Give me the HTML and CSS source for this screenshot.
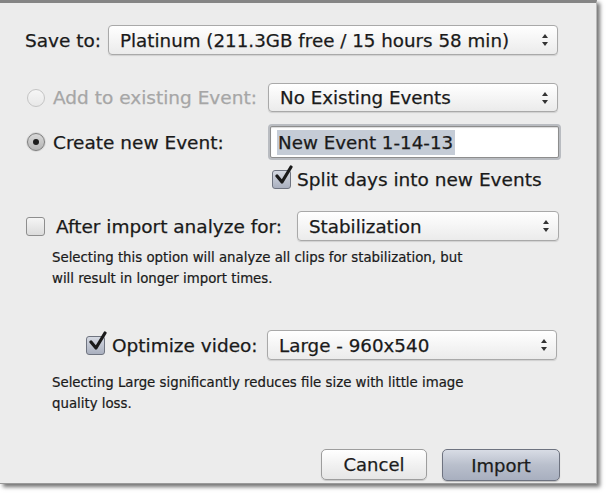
FILE: index.html
```html
<!DOCTYPE html>
<html>
<head>
<meta charset="utf-8">
<link rel="stylesheet" href="styles.css">
</head>
<body>
<div class="dialog">
  <div class="row r-save">
    <span class="label">Save to:</span>
    <div class="select w-save"><span>Platinum (211.3GB free / 15 hours 58 min)</span><i class="arrows"></i></div>
  </div>

  <div class="row r-add">
    <span class="radio disabled"></span>
    <span class="label dim lbl-radio">Add to existing Event:</span>
    <div class="select w-main"><span>No Existing Events</span><i class="arrows"></i></div>
  </div>

  <div class="row r-new">
    <span class="radio on"></span>
    <span class="label lbl-radio">Create new Event:</span>
    <div class="field"><span class="sel">New Event 1-14-13</span></div>
  </div>

  <div class="row r-split">
    <span class="check on"><svg viewBox="0 0 24 24" width="24" height="24"><path d="M5 11 L10 17 L19 2" fill="none" stroke="#1a1a1a" stroke-width="3.2" stroke-linecap="round" stroke-linejoin="round"/></svg></span>
    <span class="label">Split days into new Events</span>
  </div>

  <div class="row r-analyze">
    <span class="check"></span>
    <span class="label lbl-analyze">After import analyze for:</span>
    <div class="select w-analyze"><span>Stabilization</span><i class="arrows"></i></div>
  </div>
  <p class="help">Selecting this option will analyze all clips for stabilization, but will result in longer import times.</p>

  <div class="row r-opt">
    <span class="check on"><svg viewBox="0 0 24 24" width="24" height="24"><path d="M5 11 L10 17 L19 2" fill="none" stroke="#1a1a1a" stroke-width="3.2" stroke-linecap="round" stroke-linejoin="round"/></svg></span>
    <span class="label lbl-opt">Optimize video:</span>
    <div class="select w-main w-opt"><span>Large - 960x540</span><i class="arrows"></i></div>
  </div>
  <p class="help help-opt">Selecting Large significantly reduces file size with little image quality loss.</p>

  <div class="buttons">
    <button class="btn cancel">Cancel</button>
    <button class="btn import">Import</button>
  </div>
</div>
</body>
</html>
```

FILE: styles.css
```css
html, body {
  margin: 0;
  padding: 0;
  background: #ffffff;
}

body {
  font-family: "DejaVu Sans", "Liberation Sans", sans-serif;
  color: #1a1a1a;
  width: 607px;
  height: 495px;
  overflow: hidden;
}

.dialog {
  box-sizing: border-box;
  width: 597px;
  height: 484px;
  background: #ececec;
  border-top: 3px solid #858585;
  border-right: 1px solid #b9b9b9;
  border-bottom: 1px solid #9a9a9a;
  box-shadow: 3px 3px 4px rgba(0, 0, 0, 0.55);
  padding: 22px 0 0 25px;
  display: flex;
  flex-direction: column;
}

.row {
  display: flex;
  align-items: center;
}

.label {
  font-size: 18.5px;
  white-space: nowrap;
  -webkit-text-stroke: 0.25px currentColor;
}

.dim { color: #a6a6a6; }

.select {
  box-sizing: border-box;
  position: relative;
  height: 30px;
  border: 1px solid #a9a9a9;
  border-radius: 4px;
  background: linear-gradient(#ffffff, #f3f3f3 60%, #ebebeb);
  box-shadow: 0 1px 1px rgba(0,0,0,0.12);
  display: flex;
  align-items: center;
  padding-left: 11px;
  font-size: 18.3px;
  white-space: nowrap;
  -webkit-text-stroke: 0.25px currentColor;
}

.arrows {
  position: absolute;
  right: 8px;
  top: 50%;
  width: 7px;
  height: 12px;
  margin-top: -6px;
}
.arrows::before, .arrows::after {
  content: "";
  position: absolute;
  left: 0;
  border-left: 3.5px solid transparent;
  border-right: 3.5px solid transparent;
}
.arrows::before { top: 0; border-bottom: 4px solid #333; }
.arrows::after { bottom: 0; border-top: 4px solid #333; }

.r-save .label { width: 83px; }
.w-save { width: 450px; }

.w-main { width: 290px; height: 29px; }
.w-opt { height: 30px; }

.r-add { margin-top: 28px; }
.lbl-radio { width: 215px; margin-left: 8px; }

.radio {
  box-sizing: border-box;
  width: 18px;
  height: 18px;
  border-radius: 50%;
  margin-left: 2px;
  flex: none;
  position: relative;
}
.radio.disabled {
  border: 1px solid #c4c4c4;
  background: linear-gradient(#f6f6f6, #e8e8e8);
}
.radio.on {
  border: 1px solid #7d7d7d;
  background: linear-gradient(#d9d9d9, #b4b4b4);
  box-shadow: 0 0 0 1px rgba(0,0,0,0.08);
}
.radio.on::after {
  content: "";
  position: absolute;
  width: 6px;
  height: 6px;
  border-radius: 50%;
  background: #1b1b1b;
  left: 5px;
  top: 5px;
}

.r-new { margin-top: 14px; }

.field {
  box-sizing: border-box;
  width: 289px;
  height: 32px;
  margin-left: 2px;
  background: #ffffff;
  border: 1px solid #8d8d8d;
  box-shadow: 0 0 0 2px #b9bcc1, inset 0 1px 1px rgba(0,0,0,0.15);
  border-radius: 2px;
  display: flex;
  align-items: center;
  padding-left: 6px;
  font-size: 18.3px;
  -webkit-text-stroke: 0.25px currentColor;
}
.sel {
  background: #c5ccd6;
  padding: 2px 2px 2px 1px;
}

.check {
  box-sizing: border-box;
  width: 19px;
  height: 19px;
  border: 1px solid #8e8e8e;
  border-radius: 3px;
  background: linear-gradient(#f5f5f5, #dcdcdc);
  flex: none;
  position: relative;
}
.check.on {
  background: linear-gradient(#d5d9e2, #aab0bf);
  border-color: #6f7480;
}
.check svg {
  position: absolute;
  left: -1px;
  top: -6px;
}

.r-split { margin-top: 11px; margin-left: 247px; }
.r-split .label { margin-left: 6px; }

.r-analyze { margin-top: 21px; }
.r-analyze .check { margin-left: 1px; }
.lbl-analyze { margin-left: 11px; width: 241px; }
.w-analyze { width: 262px; height: 30px; }

.help {
  margin: 5px 0 0 27px;
  width: 420px;
  font-family: "DejaVu Sans Condensed", "DejaVu Sans", sans-serif;
  font-size: 14.8px;
  line-height: 21px;
  -webkit-text-stroke: 0.2px currentColor;
}

.r-opt { margin-top: 42px; margin-left: 61px; }
.lbl-opt { margin-left: 7px; width: 155px; }

.help-opt { margin-top: 11px; }

.buttons {
  display: flex;
  gap: 15px;
  margin-top: 36px;
  margin-left: 296px;
}

.btn {
  box-sizing: border-box;
  height: 31px;
  font-family: "DejaVu Sans", sans-serif;
  font-size: 18px;
  color: #1c1c1c;
  border-radius: 5px;
  padding: 0;
  -webkit-text-stroke: 0.25px currentColor;
}
.cancel {
  width: 106px;
  border: 1px solid #9d9d9d;
  background: linear-gradient(#ffffff, #f0f0f0 55%, #e6e6e6);
  box-shadow: 0 1px 1px rgba(0,0,0,0.15);
}
.import {
  width: 118px;
  height: 32px;
  border: 1px solid #6e7380;
  background: linear-gradient(#d8dce5, #b9bfcc 50%, #a8afbf);
  box-shadow: 0 1px 1px rgba(0,0,0,0.2);
}
```
